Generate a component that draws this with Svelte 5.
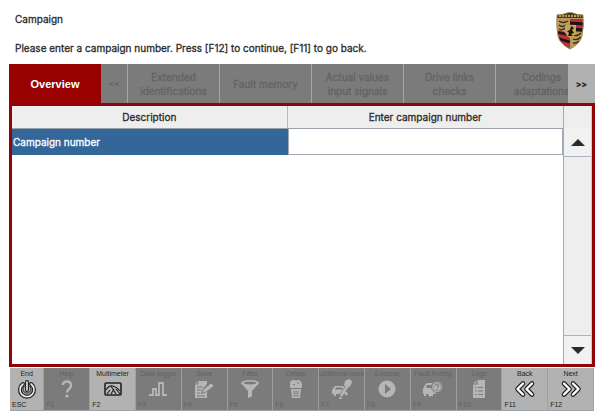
<script>
  const tabs = [
    ['Extended', 'identifications'],
    ['Fault memory'],
    ['Actual values', 'input signals'],
    ['Drive links', 'checks'],
    ['Codings', 'adaptations'],
  ];

  const keys = [
    { key: 'ESC', label: 'End', icon: 'power', on: true },
    { key: 'F1', label: 'Help', icon: 'help' },
    { key: 'F2', label: 'Multimeter', icon: 'meter', on: true },
    { key: 'F3', label: 'Data logger', icon: 'pulse' },
    { key: 'F4', label: 'Save', icon: 'save' },
    { key: 'F5', label: 'Filter', icon: 'filter' },
    { key: 'F6', label: 'Delete', icon: 'bin' },
    { key: 'F7', label: 'Additional menu', icon: 'tools' },
    { key: 'F8', label: 'Execute', icon: 'play' },
    { key: 'F9', label: 'Fault finding', icon: 'find' },
    { key: 'F10', label: 'Logs', icon: 'log' },
    { key: 'F11', label: 'Back', icon: 'back', on: true },
    { key: 'F12', label: 'Next', icon: 'next', on: true },
  ];

  let campaign = $state('');
</script>

<div class="page">
  <header>
    <div class="titles">
      <h1>Campaign</h1>
      <p>Please enter a campaign number. Press [F12] to continue, [F11] to go back.</p>
    </div>
    <svg class="crest" viewBox="0 0 28 38" role="img" aria-label="Porsche crest">
      <defs>
        <clipPath id="shield"><path d="M1 3Q7 3 14 0Q21 3 27 3Q28 14 26 24Q24 32 14 37Q4 32 2 24Q0 14 1 3Z" /></clipPath>
      </defs>
      <g clip-path="url(#shield)">
        <rect width="28" height="38" fill="#b89a5c" />
        <rect y="1" width="28" height="5" fill="#4a3a1c" />
        <path d="M3 4H25" stroke="#d8bd7c" stroke-width="1.5" stroke-dasharray="2 1" />
        <path d="M14 7H28V20H14Z" fill="#b8303c" />
        <path d="M14 11L28 12M14 17L28 18" stroke="#1d1416" stroke-width="2.8" />
        <path d="M0 18L14 21V38H0Z" fill="#b8303c" />
        <path d="M0 20L14 23M0 26L14 30" stroke="#1d1416" stroke-width="2.8" />
        <path d="M3 9Q7 12 12 9M3 13Q6 16 10 13M3 17Q6 19 9 16M17 23Q21 25 25 21M17 27Q21 29 25 25M17 31Q20 32 23 29" stroke="#3a2a18" stroke-width="1.3" fill="none" />
        <path d="M9 13H20V20Q19 24 14.500 26Q10 24 9 20Z" fill="#caa654" />
        <path d="M12 24L13 21L11 19L14 18L15 14L18 16L16 18L18 21L15 22L17 24L14 24Z" fill="#1b1512" />
      </g>
      <path d="M1 3Q7 3 14 0Q21 3 27 3Q28 14 26 24Q24 32 14 37Q4 32 2 24Q0 14 1 3Z" fill="none" stroke="#a08a5c" />
    </svg>
  </header>

  <nav>
    <button class="tab active">Overview</button>
    <button class="tab arrow" disabled>&lt;&lt;</button>
    <div class="strip">
      {#each tabs as lines}
        <button class="tab" disabled>
          {#each lines as line}<span>{line}</span>{/each}
        </button>
      {/each}
    </div>
    <button class="tab arrow more">&gt;&gt;</button>
  </nav>

  <main>
    <table>
      <thead>
        <tr><th>Description</th><th>Enter campaign number</th></tr>
      </thead>
      <tbody>
        <tr>
          <td class="name"><label for="campaign">Campaign number</label></td>
          <td><input id="campaign" type="text" bind:value={campaign} /></td>
        </tr>
      </tbody>
    </table>
    <div class="scroll">
      <div class="corner"></div>
      <button aria-label="Scroll up"><svg width="14" height="7" viewBox="0 0 14 7"><path d="M0 7L7 0L14 7Z" /></svg></button>
      <div class="track"></div>
      <button aria-label="Scroll down"><svg width="14" height="7" viewBox="0 0 14 7"><path d="M0 0L7 7L14 0Z" /></svg></button>
    </div>
  </main>

  <footer>
    {#each keys as k}
      <button class:on={k.on} disabled={!k.on}>
        <span class="label">{k.label}</span>
        <svg class="icon" viewBox="0 0 22 20" aria-hidden="true">
          {#if k.icon === 'power'}
            <g fill="none" stroke-linecap="round">
              <path d="M7 5A7 7 0 1 0 15 5" stroke="#222" stroke-width="4" />
              <path d="M7 5A7 7 0 1 0 15 5" stroke="#eee" stroke-width="1.6" />
              <path d="M8.500 7A4 4 0 1 0 13.500 7" stroke="#222" stroke-width="1" />
              <path d="M11 3V11" stroke="#222" stroke-width="4" />
              <path d="M11 3V11" stroke="#eee" stroke-width="1.6" />
            </g>
          {:else if k.icon === 'help'}
            <path d="M7 6Q7 2.500 11 2.500T15 6.500Q15 8.500 13 10T11 13.500" fill="none" stroke="#b6b6b6" stroke-width="2.4" />
            <circle cx="11" cy="17" r="1.600" fill="#b6b6b6" />
          {:else if k.icon === 'meter'}
            <rect x="3" y="4" width="16" height="12" rx="1" fill="#bbb" stroke="#222" stroke-width="1.6" />
            <path d="M4 11Q7 6 11 7T18 12" fill="none" stroke="#222" stroke-width="1.2" />
            <path d="M9 7L14 15M12 10L9 15M5 15L8 11M14 10L18 15" stroke="#222" stroke-width="1.2" />
          {:else if k.icon === 'pulse'}
            <path d="M2 16H6V10H9V16H12V4H16V16H20" fill="none" stroke="#b6b6b6" stroke-width="1.800" />
          {:else if k.icon === 'save'}
            <path d="M5 2H14V5L9 11L8 15L12 14L14 12V19H2V5Z" fill="#b6b6b6" />
            <path d="M5 2V5H2M4 8H10M4 11H8M4 14H7M4 17H12" fill="none" stroke="#7b7b7b" />
            <path d="M10 11L18 4L21 7L13 13L9 14Z" fill="#b6b6b6" stroke="#7b7b7b" stroke-width=".6" />
          {:else if k.icon === 'filter'}
            <path d="M2 4L9 12V19L13 17.500V12L20 4Z" fill="#b6b6b6" />
            <ellipse cx="11" cy="4" rx="9" ry="3" fill="#b6b6b6" />
            <ellipse cx="11" cy="4" rx="6.500" ry="1.500" fill="#7b7b7b" />
          {:else if k.icon === 'bin'}
            <path d="M5 3Q7 0 11 1.500Q15 0 16 3L17 5V9H5V6Z" fill="#b6b6b6" />
            <path d="M6 10H16L15 19H7Z" fill="#b6b6b6" />
            <path d="M5 9.500H17M9 11.500V18M11 11.500V18M13 11.500V18M8 5.500H10M12 4H14" fill="none" stroke="#7b7b7b" stroke-width=".9" />
          {:else if k.icon === 'tools'}
            <path d="M1 11L4 7H12L14 10V15H11V17H9V15H5V17H3V15H1Z" fill="#b6b6b6" />
            <path d="M5 8.500H11L12 10.500H4Z" fill="#7b7b7b" />
            <path d="M9 18L17 7M13 12L18 16" stroke="#7b7b7b" stroke-width="4" />
            <path d="M10 17L17 6" stroke="#b6b6b6" stroke-width="2.5" />
            <path d="M14 2L18 0L21 2L20 6L17 9L13 7Z" fill="#b6b6b6" />
            <path d="M10 18L9 20M14 13L16 16" stroke="#b6b6b6" stroke-width="2.5" />
          {:else if k.icon === 'play'}
            <circle cx="11" cy="10" r="8.500" fill="#b6b6b6" />
            <path d="M9 5L15 10L9 15Z" fill="#7b7b7b" />
          {:else if k.icon === 'find'}
            <path d="M1 10L3 6L5 4H12L14 10V15H11V17H9V15H4V17H2V15H1Z" fill="#b6b6b6" />
            <path d="M5 6H10V9H4Z" fill="#7b7b7b" />
            <path d="M11 13L7 17" stroke="#b6b6b6" stroke-width="2.500" />
            <circle cx="15" cy="8" r="5.500" fill="#b6b6b6" stroke="#7b7b7b" />
            <circle cx="15" cy="8" r="4" fill="none" stroke="#8b8b8b" stroke-width=".7" />
            <path d="M13.500 7Q13.500 5.500 15 5.500T16.500 7Q16.500 8 15 9M15 10V11" fill="none" stroke="#7b7b7b" stroke-width="1.200" />
          {:else if k.icon === 'log'}
            <path d="M9 1H17V19H5V5Z" fill="#b6b6b6" />
            <path d="M9 1V5H5M7 8.500H8.500M10 8.500H15M7 12H8.500M10 12H15M7 15.500H8.500M10 15.500H15" fill="none" stroke="#7b7b7b" stroke-width="1.200" />
          {:else}
            <g fill="none" stroke-linejoin="round" stroke-linecap="round" transform={k.icon === 'next' ? 'translate(22 0) scale(-1 1)' : undefined}>
              <path d="M9 4.500L3.500 10L9 15.500M18 4.500L12.500 10L18 15.500" stroke="#222" stroke-width="4.600" />
              <path d="M9 4.500L3.500 10L9 15.500M18 4.500L12.500 10L18 15.500" stroke="#fff" stroke-width="2.400" />
            </g>
          {/if}
        </svg>
        <span class="key">{k.key}</span>
      </button>
    {/each}
  </footer>
</div>

<style>
  :global(body) {
    background: #fff;
  }

  .page {
    box-sizing: border-box;
    min-height: 100vh;
    padding: 0 9px 9px;
    display: flex;
    flex-direction: column;
    font: 400 10px/14px Inter, 'Liberation Sans', Arial, sans-serif;
    color: #2b2b2b;
    -webkit-text-stroke: 0.3px;
  }

  button {
    margin: 0;
    padding: 0;
    border: 0;
    border-radius: 0;
    font: inherit;
    color: inherit;
  }

  header {
    display: flex;
    justify-content: space-between;
    padding: 12px 11px 0 6px;
    height: 52px;
  }

  h1,
  p {
    margin: 0 0 15px;
    font-size: 10px;
    line-height: 14px;
    font-weight: 400;
  }

  .crest {
    width: 28px;
    height: 38px;
  }

  nav {
    display: flex;
    height: 39px;
    background: #7b7b7b;
  }

  .tab {
    flex: 0 0 92px;
    box-sizing: border-box;
    display: flex;
    flex-direction: column;
    align-items: center;
    justify-content: center;
    background: #7b7b7b;
    color: #636363;
    border-right: 1px solid #a6a6a6;
    white-space: nowrap;
  }

  .active {
    background: #990000;
    color: #fff;
    font-family: 'Liberation Sans', Arial, sans-serif;
    font-size: 11px;
    font-weight: 700;
    border: 0;
    -webkit-text-stroke: 0;
  }

  .arrow {
    flex-basis: 27px;
    font-size: 8px;
  }

  .more {
    background: #b0b0b0;
    color: #222;
    border: 0;
    font-weight: 700;
  }

  .strip {
    flex: 1;
    min-width: 0;
    display: flex;
    overflow: hidden;
  }

  main {
    flex: 1;
    display: flex;
    align-items: stretch;
    border: 3px solid #8f0407;
    background: #fff;
  }

  table {
    flex: 1;
    width: 100%;
    align-self: flex-start;
    table-layout: fixed;
    border-collapse: separate;
    border-spacing: 0;
  }

  th {
    height: 22px;
    padding: 0;
    background: #eee;
    border-right: 1px solid #b4b8c0;
    border-bottom: 1px solid #9aa0aa;
    font-weight: 400;
  }

  th:last-child {
    border-right: 0;
  }

  td {
    padding: 0;
    height: 26px;
  }

  .name {
    padding-left: 1px;
    background: #336699;
    color: #fff;
  }

  input {
    display: block;
    box-sizing: border-box;
    width: 100%;
    height: 26px;
    padding: 0 4px;
    border: 1px solid #a3a9b3;
    border-top: 0;
    background: #fff;
    font: inherit;
    outline: none;
  }

  .scroll {
    flex: 0 0 29px;
    box-sizing: border-box;
    display: flex;
    flex-direction: column;
    border-left: 1px solid #a3aab8;
    border-right: 1px solid #ccc;
    background: #eee;
  }

  .corner {
    height: 22px;
  }

  .scroll button {
    height: 28px;
    display: flex;
    align-items: center;
    justify-content: center;
    background: #f1f1f1;
  }

  .scroll path {
    fill: #2b2b2b;
  }

  .track {
    flex: 1;
    border: solid #a9b2c0;
    border-width: 1px 0;
  }

  footer {
    display: grid;
    grid-template-columns: 3fr repeat(12, 4fr);
    margin: 1px 1px 0;
  }

  footer button {
    box-sizing: border-box;
    min-width: 0;
    height: 43px;
    display: flex;
    flex-direction: column;
    align-items: center;
    overflow: hidden;
    background: #7b7b7b;
    color: #636363;
    border-right: 1px solid #9d9d9d;
    border-bottom: 1px solid #a0a0a0;
    font-family: 'Liberation Sans', Arial, sans-serif;
    font-size: 7px;
    line-height: 8px;
    -webkit-text-stroke: 0;
  }

  footer .on {
    background: #b2b2b2;
    color: #222;
    border-color: #9aa1ab;
  }

  .label {
    padding-top: 2px;
    white-space: nowrap;
  }

  .icon {
    width: 22px;
    height: 20px;
    margin-top: 1px;
    flex: none;
  }

  .key {
    align-self: flex-start;
    padding: 2px;
  }
</style>
